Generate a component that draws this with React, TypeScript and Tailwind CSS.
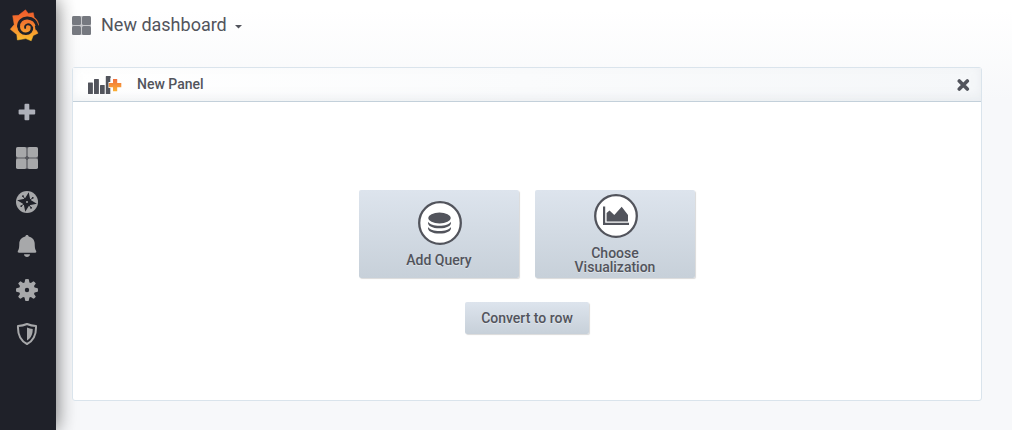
import type { ReactNode } from "react";

function GrafanaLogo() {
  return (
    <svg viewBox="9 9 32 34" className="h-[34px] w-8" aria-hidden="true">
      <defs>
        <linearGradient id="logo-fill" x1="0" y1="0" x2="0" y2="1">
          <stop offset="0" stopColor="#f05a2b" />
          <stop offset="0.45" stopColor="#f47b2f" />
          <stop offset="1" stopColor="#fcc02f" />
        </linearGradient>
      </defs>
      <path
        d="M25.500 9.800 28.200 13.400 33.300 12.700 34.200 17.400C36.900 19.300 38.500 22 38.600 25.300L37 24.800 35.400 28.500 38 33.200 33.200 35.600 31.200 40.800 25.800 38.600 17.400 40 16.800 34.600 10.300 29.200 14.200 24.600 12.700 15.700 18.500 15.300Z"
        fill="url(#logo-fill)"
        stroke="url(#logo-fill)"
        strokeWidth="0.500"
        strokeLinejoin="round"
      />
      <g fill="none" stroke="#1f2129" strokeLinecap="round">
        <path d="M37.300 26.800C36.300 21.500 32.400 18.300 27.500 18 22.300 17.700 18.500 21.600 18.600 26.400" strokeWidth="3" />
        <path d="M18.600 26.400C18.700 31 22 33.900 26 33.800 29.800 33.700 32.300 30.900 31.900 27.700" strokeWidth="2.600" />
        <path d="M31.900 27.700C31.500 25.200 29.400 24 27.400 24.400 25.500 24.800 24.700 26.500 25.200 27.900" strokeWidth="1.900" />
      </g>
      <path d="M37.300 25.800 34.800 26 35.800 30.200 40 29.500Z" fill="#1f2129" />
    </svg>
  );
}

function AppsIcon({ className }: { className: string }) {
  return (
    <svg viewBox="0 0 22 22" className={className} fill="currentColor" aria-hidden="true">
      <rect width="22" height="22" rx="2" opacity="0.4" />
      <rect x="0" y="0" width="10.400" height="10.400" rx="1.800" />
      <rect x="11.600" y="0" width="10.400" height="10.400" rx="1.800" />
      <rect x="0" y="11.600" width="10.400" height="10.400" rx="1.800" />
      <rect x="11.600" y="11.600" width="10.400" height="10.400" rx="1.800" />
    </svg>
  );
}

function PlusIcon() {
  return (
    <svg viewBox="0 0 22 22" className="size-[22px] text-[#aeb1ba]" fill="currentColor" aria-hidden="true">
      <rect x="2.600" y="6.600" width="16.600" height="4.800" rx="1" />
      <rect x="8.500" y="0.700" width="4.800" height="16.600" rx="1" />
    </svg>
  );
}

function CompassIcon() {
  return (
    <svg viewBox="0 0 22 22" className="size-[22px]" aria-hidden="true">
      <circle cx="11" cy="11" r="11" fill="currentColor" />
      <g fill="#1f2129" transform="rotate(10 11 11)">
        <path d="M11 1 13.800 8.200 21 11 13.800 13.800 11 21 8.200 13.800 1 11 8.200 8.200Z" />
        <circle cx="6" cy="6" r="0.900" />
        <circle cx="16" cy="6" r="0.900" />
        <circle cx="16" cy="16" r="0.900" />
        <circle cx="6" cy="16" r="0.900" />
        <path d="M6 6l10 10M16 6 6 16" stroke="#1f2129" strokeWidth="0.900" />
      </g>
      <circle cx="11" cy="11" r="1" fill="currentColor" />
    </svg>
  );
}

function BellIcon() {
  return (
    <svg viewBox="0 0 22 22" className="size-[22px]" fill="currentColor" aria-hidden="true">
      <path d="M11 0c1 0 1.600.6 1.700 1.500 3.800.9 5.900 3.700 6 7.100.1 3.500.2 4.900.9 6.300.3.600.7 1 .7 1.700 0 .8-.4 1.200-1 1.200H2.700c-.6 0-1-.4-1-1.200 0-.7.4-1.100.7-1.700.7-1.400.8-2.800.9-6.300.1-3.400 2.200-6.200 6-7.100C9.400.6 10 0 11 0Z" />
      <path d="M8 19.200h6c-.2 1.700-1.400 2.700-3 2.700s-2.800-1-3-2.700Z" />
    </svg>
  );
}

function GearIcon() {
  return (
    <svg viewBox="0 0 22 22" className="size-[22px]" fill="currentColor" aria-hidden="true">
      <path
        fillRule="evenodd"
        d="M9.200.3Q11-.3 12.800.3L13.400 3.400 14.900 4 17.400 2.200Q19.100 3 19.800 4.600L18 7.100 18.600 8.600 21.700 9.200Q22.300 11 21.700 12.800L18.600 13.400 18 14.900 19.800 17.400Q19 19.100 17.400 19.800L14.900 18 13.400 18.600 12.800 21.700Q11 22.300 9.200 21.700L8.600 18.600 7.100 18 4.600 19.800Q2.900 19 2.200 17.400L4 14.900 3.400 13.400.3 12.800Q-.3 11 .3 9.200L3.400 8.600 4 7.100 2.200 4.600Q3 2.900 4.600 2.200L7.100 4 8.600 3.400ZM11 8.800a2.200 2.200 0 1 0 0 4.400 2.200 2.200 0 0 0 0-4.400Z"
      />
    </svg>
  );
}

function ShieldIcon() {
  return (
    <svg viewBox="0 0 22 22" className="size-[22px]" aria-hidden="true">
      <path
        d="M11 1C8.200 2.300 5.200 2.900 2 2.900 1.600 11.500 4.600 17.800 11 21 17.400 17.800 20.400 11.500 20 2.900 16.800 2.900 13.800 2.300 11 1Z"
        fill="none"
        stroke="currentColor"
        strokeWidth="2"
        strokeLinejoin="round"
      />
      <path d="M11 4.600c1.900.8 3.700 1.200 5.700 1.300.1 5.200-1.700 9-5.700 11.500Z" fill="currentColor" />
    </svg>
  );
}

function AddPanelIcon() {
  return (
    <svg viewBox="0 0 34 20" className="h-5 w-[34px]" aria-hidden="true">
      <defs>
        <linearGradient id="add-plus" x1="0" y1="0" x2="0" y2="1">
          <stop offset="0" stopColor="#f0703e" />
          <stop offset="1" stopColor="#fbb034" />
        </linearGradient>
      </defs>
      <g fill="#52545c">
        <rect x="0" y="7.500" width="4.900" height="11.500" rx="0.500" />
        <rect x="6" y="4" width="4.900" height="15" rx="0.500" />
        <rect x="12" y="10" width="4.700" height="9" rx="0.500" />
        <path d="M17.800 1.500q0-.5.500-.5h3.900q.5 0 .5.500V3h-.4v4h-1.800v6h1.800v6h-4q-.5 0-.5-.5Z" />
      </g>
      <path d="M25 4h4.200v4h4.100v4.200h-4.100v4.100H25v-4.100h-4.100V8H25Z" fill="url(#add-plus)" />
    </svg>
  );
}

function DatabaseIcon() {
  return (
    <svg viewBox="0 0 46 44" className="h-11 w-[46px]" aria-hidden="true">
      <circle cx="24" cy="22" r="20.800" fill="#fff" stroke="#52545c" strokeWidth="2.300" />
      <g fill="#52545c" transform="translate(1.500 .300)">
        <ellipse cx="22" cy="16.700" rx="11.300" ry="5.400" />
        <path d="M10.700 20.400c1.500 2.600 5.800 4 11.300 4s9.800-1.400 11.300-4c1.300 4.200-4.300 6.600-11.300 6.600s-12.600-2.400-11.300-6.600Z" />
        <path d="M10.700 25.700c1.500 2.600 5.800 4 11.300 4s9.800-1.400 11.300-4c1.300 4.200-4.300 6.600-11.300 6.600s-12.600-2.400-11.300-6.600Z" />
      </g>
    </svg>
  );
}

function AreaChartIcon() {
  return (
    <svg viewBox="0 0 46 44" className="h-11 w-[46px]" aria-hidden="true">
      <circle cx="24" cy="22" r="20.800" fill="#fff" stroke="#52545c" strokeWidth="2.300" />
      <g fill="#52545c" transform="translate(2 0)">
        <path d="M9 12.500h2.200v16.300H35v2.300H9Z" />
        <path d="M12.600 27.600v-8.700l2.900-2.300 4.800 4.400 7.400-8.300 6.300 8.300v6.600Z" />
      </g>
    </svg>
  );
}

function NavItem({ label, children }: { label: string; children: ReactNode }) {
  return (
    <a href="#" aria-label={label} className="flex h-11 w-full items-center justify-center pr-0.5 text-[#a7a8aa]">
      {children}
    </a>
  );
}

const buttonStyle =
  "rounded-xs bg-linear-to-b from-[#dde4ed] to-[#c7d0d9] font-medium text-[#52545c] shadow-[1px_1px_1px_rgba(0,0,0,0.15)] [text-shadow:0_1px_0_rgba(255,255,255,0.4)]";

export default function App() {
  return (
    <div className="flex min-h-screen bg-[linear-gradient(180deg,#ffffff_10px,#f7f8fa_100px)] font-[Roboto,sans-serif] text-sm text-[#52545c]">
      <nav className="flex w-14 shrink-0 flex-col items-center bg-[#1f2129] shadow-[0_0_20px_rgba(0,0,0,0.6)]">
        <a href="#" aria-label="Home" className="flex h-[52px] w-full items-center justify-center pr-1.5">
          <GrafanaLogo />
        </a>
        <div className="w-full pt-10">
          <NavItem label="Create"><PlusIcon /></NavItem>
          <NavItem label="Dashboards"><AppsIcon className="size-[22px]" /></NavItem>
          <NavItem label="Explore"><CompassIcon /></NavItem>
          <NavItem label="Alerting"><BellIcon /></NavItem>
          <NavItem label="Configuration"><GearIcon /></NavItem>
          <NavItem label="Server Admin"><ShieldIcon /></NavItem>
        </div>
      </nav>

      <main className="min-w-0 flex-1 pr-[30px] pb-7 pl-4">
        <header className="flex h-[50px] items-center">
          <button type="button" className="flex items-center text-lg">
            <AppsIcon className="mr-2.5 size-[19px] text-[#767980]" />
            <span>New dashboard</span>
            <svg viewBox="0 0 7 4" className="mt-1 ml-2 h-1 w-[7px]" fill="currentColor" aria-hidden="true">
              <path d="M0 0h7L3.500 3.500Z" />
            </svg>
          </button>
        </header>

        <section className="mt-[17px] rounded-[3px] border border-[#dae4ec] bg-white">
          <div className="flex h-[34px] items-center border-b border-[#c3d0da] bg-linear-to-r from-white to-[#f5f7f9] px-[15px] shadow-[inset_0_-4px_10px_rgba(199,208,217,0.25)]">
            <AddPanelIcon />
            <h2 className="ml-[15px] flex-1 pb-0.5 font-medium">New Panel</h2>
            <button type="button" aria-label="Close" className="-mr-1">
              <svg viewBox="0 0 13 12" className="h-3 w-[13px]" stroke="currentColor" strokeWidth="3.600" strokeLinecap="round" aria-hidden="true">
                <path d="M2.300 2 10.300 10M10.300 2 2.300 10" />
              </svg>
            </button>
          </div>
          <div className="flex flex-col items-center gap-6 pt-22 pb-[66px]">
            <div className="flex flex-wrap justify-center gap-4">
              <button type="button" className={`flex h-22 w-40 flex-col items-center justify-center gap-2 leading-[14px] ${buttonStyle}`}>
                <DatabaseIcon />
                <span>Add Query</span>
              </button>
              <button type="button" className={`flex h-22 w-40 flex-col items-center justify-center gap-2 leading-[14px] ${buttonStyle}`}>
                <AreaChartIcon />
                <span className="w-24">Choose Visualization</span>
              </button>
            </div>
            <button type="button" className={`h-8 px-4 ${buttonStyle}`}>
              Convert to row
            </button>
          </div>
        </section>
      </main>
    </div>
  );
}
